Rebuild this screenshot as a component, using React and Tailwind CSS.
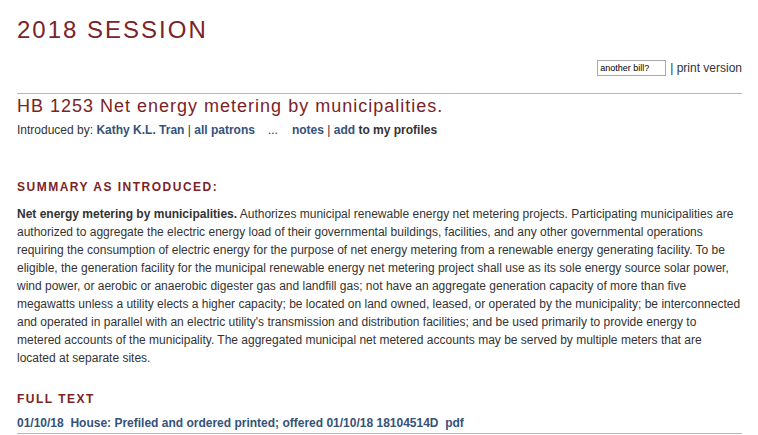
export default function App() {
  const red = "text-[#7b2327]";
  const link = "text-[#34527a] font-bold";
  return (
    <div className="bg-white w-[758px] h-[435px] overflow-hidden font-['Liberation_Sans',Arial,sans-serif] text-[12px] text-[#333] pl-[17px] pr-[16px]">
      <h1 className={`${red} text-[24px] leading-[28px] tracking-[2px] pt-[16px]`}>2018 SESSION</h1>
      <div className="flex justify-end items-center mt-[16px] h-[16px]">
        <div className="w-[69px] h-[16px] border border-[#a9a9a9] text-[9px] leading-[14px] pl-[2px] text-black">another bill?</div>
        <span className="ml-[4px] text-[12px]">| print version</span>
      </div>
      <div className="border-t border-[#bcb6a8] mt-[17px]"></div>
      <h2 className={`${red} text-[18px] leading-[22px] tracking-[1px] mt-[1px]`}>HB 1253 Net energy metering by municipalities.</h2>
      <div className="mt-[5px] leading-[16px]">
        Introduced by: <span className={link}>Kathy K.L. Tran</span> | <span className={link}>all patrons</span>
        <span className="ml-[13px] mr-[14px]">...</span>
        <span className={link}>notes</span> | <span className={link}>add</span> <span className="font-bold">to my profiles</span>
      </div>
      <h3 className={`${red} font-bold tracking-[1.5px] mt-[41px] leading-[16px]`}>SUMMARY AS INTRODUCED:</h3>
      <p className="mt-[10px] leading-[18px]">
        <b>Net energy metering by municipalities.</b> Authorizes municipal renewable energy net metering projects. Participating municipalities are authorized to aggregate the electric energy load of their governmental buildings, facilities, and any other governmental operations requiring the consumption of electric energy for the purpose of net energy metering from a renewable energy generating facility. To be eligible, the generation facility for the municipal renewable energy net metering project shall use as its sole energy source solar power, wind power, or aerobic or anaerobic digester gas and landfill gas; not have an aggregate generation capacity of more than five megawatts unless a utility elects a higher capacity; be located on land owned, leased, or operated by the municipality; be interconnected and operated in parallel with an electric utility's transmission and distribution facilities; and be used primarily to provide energy to metered accounts of the municipality. The aggregated municipal net metered accounts may be served by multiple meters that are located at separate sites.
      </p>
      <h3 className={`${red} font-bold tracking-[1.5px] mt-[24px] leading-[16px]`}>FULL TEXT</h3>
      <div className={`${link} mt-[8px] leading-[16px] border-b border-[#bcb6a8] pb-[2px]`}>
        01/10/18&nbsp; House: Prefiled and ordered printed; offered 01/10/18 18104514D&nbsp; pdf
      </div>
    </div>
  );
}
